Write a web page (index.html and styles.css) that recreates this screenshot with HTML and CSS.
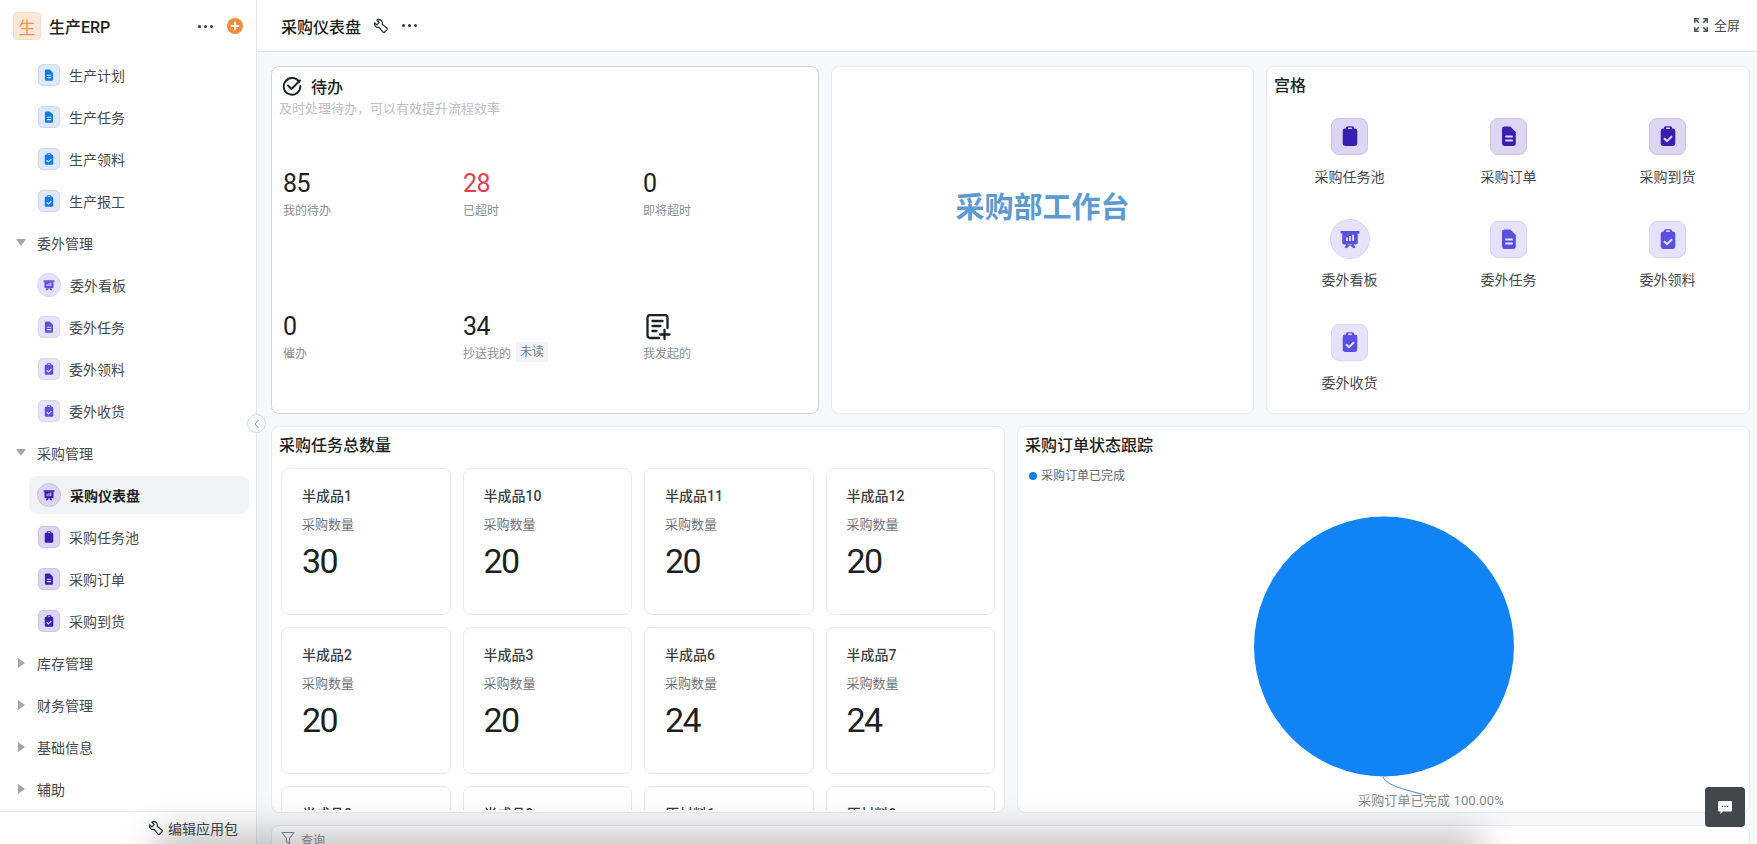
FILE: index.html
```html
<!DOCTYPE html>
<html lang="zh-CN">
<head>
<meta charset="utf-8">
<title>采购仪表盘</title>
<link rel="stylesheet" href="styles.css">
</head>
<body>
<svg class="defs" width="0" height="0" aria-hidden="true">
  <symbol id="i-clip" viewBox="0 0 24 24">
    <rect x="4.7" y="4.6" width="14.6" height="17.4" rx="2.4" fill="currentColor"/>
    <rect x="8" y="2.2" width="8" height="4.6" rx="1.6" fill="currentColor"/>
    <rect x="10" y="3.6" width="4" height="1.3" rx=".6" class="knock"/>
  </symbol>
  <symbol id="i-check" viewBox="0 0 24 24">
    <rect x="4.7" y="4.6" width="14.6" height="17.4" rx="2.4" fill="currentColor"/>
    <rect x="8" y="2.2" width="8" height="4.6" rx="1.6" fill="currentColor"/>
    <rect x="10" y="3.6" width="4" height="1.3" rx=".6" class="knock"/>
    <path d="M8 14.2l3 3 5-5" fill="none" stroke-width="2" class="knock-line"/>
  </symbol>
  <symbol id="i-doc" viewBox="0 0 24 24">
    <path d="M7.4 2.5h5.8l5.6 5.6v11.5a2.4 2.4 0 0 1-2.4 2.4H7.4A2.4 2.4 0 0 1 5 19.6V4.9a2.4 2.4 0 0 1 2.4-2.4z" fill="currentColor"/>
    <rect x="8.2" y="11.6" width="7.6" height="1.8" rx=".4" class="knock"/>
    <rect x="8.2" y="15.6" width="7.6" height="1.8" rx=".4" class="knock"/>
  </symbol>
  <symbol id="i-board" viewBox="0 0 24 24">
    <rect x="2.5" y="4" width="19" height="2.4" rx=".5" fill="currentColor"/>
    <path d="M4.2 6h15.6v9.5a2 2 0 0 1-2 2H6.200a2 2 0 0 1-2-2z" fill="currentColor"/>
    <path d="M8.500 17l-2 3.500 2 .8 3.500-3zM15.500 17l2 3.500-2 .8-3.500-3z" fill="currentColor"/>
    <rect x="8" y="10.500" width="1.800" height="3.500" class="knock"/>
    <rect x="11.100" y="9" width="1.800" height="5" class="knock"/>
    <rect x="14.200" y="7.800" width="1.800" height="6.200" class="knock"/>
  </symbol>
  <symbol id="i-wrench" viewBox="0 0 16 16">
    <path d="M10.200 1.500a3.600 3.600 0 0 0-3.400 4.700L1.800 10.300l.1 1.300 2.600 2.700 1.300.1 0 0 4.100-5.100a3.600 3.600 0 0 0 4.500-4.500l-2.300 2.100-2.300-2.300 2.200-2.300a3.600 3.600 0 0 0-1.800-.800z" transform="matrix(-1 0 0 1 16 0)" fill="none" stroke="currentColor" stroke-width="1.300" stroke-linejoin="round"/>
  </symbol>
</svg>

<aside class="sidebar">
  <header class="side-head">
    <span class="logo">生</span>
    <span class="app-name">生产ERP</span>
    <span class="dots side-dots"><i></i><i></i><i></i></span>
    <span class="add-btn">
      <svg width="16" height="16" viewBox="0 0 16 16"><circle cx="8" cy="8" r="8" fill="#f58b3e"/><path d="M8 4.500v7M4.500 8h7" stroke="#fff" stroke-width="1.800" stroke-linecap="round"/></svg>
    </span>
  </header>
  <nav class="side-list">
    <a class="item"><span class="tile blue"><svg class="ico"><use href="#i-doc"/></svg></span>生产计划</a>
    <a class="item"><span class="tile blue"><svg class="ico"><use href="#i-doc"/></svg></span>生产任务</a>
    <a class="item"><span class="tile blue"><svg class="ico"><use href="#i-check"/></svg></span>生产领料</a>
    <a class="item"><span class="tile blue"><svg class="ico"><use href="#i-check"/></svg></span>生产报工</a>
    <div class="group"><span class="tri down"></span>委外管理</div>
    <a class="item"><span class="tile round light"><svg class="ico"><use href="#i-board"/></svg></span>委外看板</a>
    <a class="item"><span class="tile light"><svg class="ico"><use href="#i-doc"/></svg></span>委外任务</a>
    <a class="item"><span class="tile light"><svg class="ico"><use href="#i-check"/></svg></span>委外领料</a>
    <a class="item"><span class="tile light"><svg class="ico"><use href="#i-check"/></svg></span>委外收货</a>
    <div class="group"><span class="tri down"></span>采购管理</div>
    <a class="item active"><span class="tile round dark"><svg class="ico"><use href="#i-board"/></svg></span>采购仪表盘</a>
    <a class="item"><span class="tile dark"><svg class="ico"><use href="#i-clip"/></svg></span>采购任务池</a>
    <a class="item"><span class="tile dark"><svg class="ico"><use href="#i-doc"/></svg></span>采购订单</a>
    <a class="item"><span class="tile dark"><svg class="ico"><use href="#i-check"/></svg></span>采购到货</a>
    <div class="group"><span class="tri right"></span>库存管理</div>
    <div class="group"><span class="tri right"></span>财务管理</div>
    <div class="group"><span class="tri right"></span>基础信息</div>
    <div class="group"><span class="tri right"></span>辅助</div>
  </nav>
  <footer class="side-foot">
    <svg class="wrench"><use href="#i-wrench"/></svg>编辑应用包
  </footer>
  <button class="collapse" aria-label="收起">
    <svg width="8" height="10" viewBox="0 0 8 10"><path d="M5.500 1L2 5l3.500 4" fill="none" stroke="#9a9ea6" stroke-width="1"/></svg>
  </button>
</aside>

<main class="main">
  <header class="top">
    <h1 class="top-title">采购仪表盘</h1>
    <svg class="wrench top-wrench"><use href="#i-wrench"/></svg>
    <span class="dots"><i></i><i></i><i></i></span>
    <span class="full">
      <svg width="14" height="14" viewBox="0 0 14 14"><path d="M.8 4.800V.8h4M9.200.8h4v4M13.200 9.200v4h-4M4.800 13.200h-4v-4" fill="none" stroke="#4d5157" stroke-width="1.600"/><path d="M1.500 1.500l3.300 3.300M12.500 1.500L9.200 4.800M12.500 12.500L9.200 9.200M1.500 12.500l3.300-3.300" stroke="#4d5157" stroke-width="1.600"/></svg>
      全屏
    </span>
  </header>

  <div class="board">
    <section class="row-one">
      <div class="card todo">
        <div class="todo-title">
          <svg width="20" height="20" viewBox="0 0 20 20"><path d="M17.200 6.200A8.300 8.300 0 1 0 18.300 10" fill="none" stroke="#1c1f23" stroke-width="1.900" stroke-linecap="round"/><path d="M6 9.500l3.500 3.500 8.500-8.500" fill="none" stroke="#1c1f23" stroke-width="1.900" stroke-linecap="round" stroke-linejoin="round"/></svg>
          待办
        </div>
        <p class="todo-sub">及时处理待办，可以有效提升流程效率</p>
        <div class="stats">
          <div class="stat"><b class="num">85</b><span class="lab">我的待办</span></div>
          <div class="stat"><b class="num red">28</b><span class="lab">已超时</span></div>
          <div class="stat"><b class="num">0</b><span class="lab">即将超时</span></div>
          <div class="stat"><b class="num">0</b><span class="lab">催办</span></div>
          <div class="stat"><b class="num">34</b><span class="lab">抄送我的<em class="tag">未读</em></span></div>
          <div class="stat">
            <span class="num note">
              <svg class="note-ico" width="25" height="26" viewBox="0 0 25 26"><path d="M13 24H4a2.500 2.500 0 0 1-2.500-2.500v-18A2.500 2.500 0 0 1 4 1h15a2.500 2.500 0 0 1 2.500 2.500V14" fill="none" stroke="#1c1f23" stroke-width="2.300" stroke-linecap="round"/><path d="M6.500 7h10M6.500 12h8M6.500 17h4M18.500 16v9M14 20.500h9.500" fill="none" stroke="#1c1f23" stroke-width="2.300" stroke-linecap="round"/></svg>
            </span>
            <span class="lab">我发起的</span>
          </div>
        </div>
      </div>

      <div class="card hero"><h2 class="hero-text">采购部工作台</h2></div>

      <div class="card grid-card">
        <h3 class="card-title">宫格</h3>
        <div class="grid">
          <div class="cell"><span class="box"><span class="tile big dark"><svg class="ico"><use href="#i-clip"/></svg></span></span>采购任务池</div>
          <div class="cell"><span class="box"><span class="tile big dark"><svg class="ico"><use href="#i-doc"/></svg></span></span>采购订单</div>
          <div class="cell"><span class="box"><span class="tile big dark"><svg class="ico"><use href="#i-check"/></svg></span></span>采购到货</div>
          <div class="cell"><span class="box"><span class="tile big round light"><svg class="ico"><use href="#i-board"/></svg></span></span>委外看板</div>
          <div class="cell"><span class="box"><span class="tile big light"><svg class="ico"><use href="#i-doc"/></svg></span></span>委外任务</div>
          <div class="cell"><span class="box"><span class="tile big light"><svg class="ico"><use href="#i-check"/></svg></span></span>委外领料</div>
          <div class="cell"><span class="box"><span class="tile big light"><svg class="ico"><use href="#i-check"/></svg></span></span>委外收货</div>
        </div>
      </div>
    </section>

    <section class="row-two">
      <div class="card tasks">
        <h3 class="card-title">采购任务总数量</h3>
        <div class="task-grid">
          <div class="task"><div class="t-name">半成品1</div><div class="t-lab">采购数量</div><div class="t-num">30</div></div>
          <div class="task"><div class="t-name">半成品10</div><div class="t-lab">采购数量</div><div class="t-num">20</div></div>
          <div class="task"><div class="t-name">半成品11</div><div class="t-lab">采购数量</div><div class="t-num">20</div></div>
          <div class="task"><div class="t-name">半成品12</div><div class="t-lab">采购数量</div><div class="t-num">20</div></div>
          <div class="task"><div class="t-name">半成品2</div><div class="t-lab">采购数量</div><div class="t-num">20</div></div>
          <div class="task"><div class="t-name">半成品3</div><div class="t-lab">采购数量</div><div class="t-num">20</div></div>
          <div class="task"><div class="t-name">半成品6</div><div class="t-lab">采购数量</div><div class="t-num">24</div></div>
          <div class="task"><div class="t-name">半成品7</div><div class="t-lab">采购数量</div><div class="t-num">24</div></div>
          <div class="task"><div class="t-name">半成品8</div><div class="t-lab">采购数量</div><div class="t-num">20</div></div>
          <div class="task"><div class="t-name">半成品9</div><div class="t-lab">采购数量</div><div class="t-num">20</div></div>
          <div class="task"><div class="t-name">原材料1</div><div class="t-lab">采购数量</div><div class="t-num">20</div></div>
          <div class="task"><div class="t-name">原材料2</div><div class="t-lab">采购数量</div><div class="t-num">20</div></div>
        </div>
      </div>

      <div class="card chart">
        <h3 class="card-title">采购订单状态跟踪</h3>
        <div class="legend"><i class="legend-dot"></i>采购订单已完成</div>
        <svg class="pie" viewBox="0 0 731 326" width="731" height="326">
          <circle cx="366" cy="160.500" r="130" fill="#1084f4"/>
          <path d="M365 291c4 9 24 13 42 18" fill="none" stroke="#3d86c6" stroke-width="1"/>
          <text x="340" y="319" class="pie-label">采购订单已完成 100.00%</text>
        </svg>
      </div>
    </section>

    <section class="card query">
      <svg width="14" height="14" viewBox="0 0 14 14"><path d="M1 1.500h12L8.500 7.500v5l-3-1.500V7.500z" fill="none" stroke="#8a8f99" stroke-width="1.100" stroke-linejoin="round"/></svg>
      查询
    </section>
  </div>
</main>

<button class="chat" aria-label="反馈">
  <svg width="16" height="16" viewBox="0 0 16 16"><path d="M2 2h12a1 1 0 0 1 1 1v8.500a1 1 0 0 1-1 1H6L3.500 15v-2.500H2a1 1 0 0 1-1-1V3a1 1 0 0 1 1-1z" fill="#fff"/><path d="M4.800 7.300h1.200M7.400 7.300h1.200M10 7.300h1.200" stroke="#42464d" stroke-width="1.200"/></svg>
</button>
<div class="bottom-shade"></div>
</body>
</html>
```

FILE: styles.css
```css
* { box-sizing: border-box; }
html, body { height: 100%; }
body {
  margin: 0;
  height: 844px;
  display: flex;
  overflow: hidden;
  position: relative;
  background: #f7f8fa;
  color: #1f2329;
  font-family: Roboto, "Noto Sans CJK SC", sans-serif;
  font-size: 14px;
}
.defs { position: absolute; }
h1, h2, h3, p { margin: 0; }
em { font-style: normal; }

/* sidebar */
.sidebar {
  width: 257px;
  flex: none;
  position: relative;
  z-index: 2;
  display: flex;
  flex-direction: column;
  background: #fff;
  border-right: 1px solid #e5e6eb;
}
.side-head {
  height: 52px;
  flex: none;
  display: flex;
  align-items: center;
  padding-left: 13px;
}
.logo {
  width: 28px;
  height: 28px;
  display: flex;
  align-items: center;
  justify-content: center;
  background: #fde7d8;
  border: 1px solid #f8dcc8;
  border-radius: 4px;
  color: #ef9450;
  font-size: 17px;
}
.app-name {
  margin-left: 8px;
  font-size: 16px;
  font-weight: 500;
  color: #1c1f23;
}
.dots { display: inline-flex; gap: 3px; align-items: center; }
.dots i { width: 3px; height: 3px; border-radius: 50%; background: #33373d; }
.side-dots { margin-left: auto; }
.add-btn { display: flex; margin: 0 13px 0 14px; }

.side-list {
  flex: 1;
  min-height: 0;
  overflow: hidden;
  padding-top: 4px;
  display: flex;
  flex-direction: column;
  gap: 4px;
}
.item, .group {
  flex: none;
  height: 38px;
  display: flex;
  align-items: center;
  color: #45494f;
}
.item {
  margin-left: 29px;
  width: 220px;
  padding-left: 8px;
  border-radius: 8px;
}
.item .tile { margin-right: 9px; }
.item.active { background: #f2f3f7; color: #1c1f23; font-weight: 600; }
.group { position: relative; padding-left: 37px; }
.tri { position: absolute; width: 0; height: 0; border-style: solid; border-color: transparent; }
.tri.down { left: 16px; top: 15px; border-width: 7px 5.5px 0; border-top-color: #a3a6ac; }
.tri.right { left: 18px; top: 14px; border-width: 5.5px 0 5.5px 7px; border-left-color: #a3a6ac; }

.side-foot {
  height: 33px;
  flex: none;
  border-top: 1px solid #e5e6eb;
  display: flex;
  align-items: center;
  justify-content: flex-end;
  gap: 4px;
  padding: 0 18px 0 0;
  color: #45494f;
}
.wrench { width: 16px; height: 16px; color: #33373d; }

.collapse {
  position: absolute;
  right: -10px;
  top: 414px;
  width: 19px;
  height: 19px;
  padding: 0;
  display: flex;
  align-items: center;
  justify-content: center;
  background: #f7f8fa;
  border: 1px solid #d8dbe0;
  border-radius: 50%;
}

/* icon tiles */
.tile {
  --bg: #fff;
  width: 22px;
  height: 22px;
  margin-left: 1px;
  flex: none;
  display: flex;
  align-items: center;
  justify-content: center;
  background: var(--bg);
  border: 1px solid var(--bd);
  border-radius: 5px;
  color: var(--fg);
}
.tile.round { width: 24px; height: 24px; margin-left: 0; border-radius: 50%; }
.blue { --bg: #dfe7fb; --bd: #cbd8f3; --fg: #0f7be8; }
.light { --bg: #e6e2fc; --bd: #d9d3f6; --fg: #5a50e0; }
.dark { --bg: #ddd6f3; --bd: #cbc1ea; --fg: #371fb0; }
.ico { width: 14px; height: 14px; }
.knock { fill: var(--bg); }
.knock-line { stroke: var(--bg); }
.tile.big { width: 37px; height: 37px; margin: 0; border-radius: 8px; }
.tile.big.round { width: 40px; height: 40px; border-radius: 50%; }
.tile.big .ico { width: 24px; height: 24px; }

/* main */
.main { flex: 1; min-width: 0; display: flex; flex-direction: column; }
.top {
  height: 52px;
  flex: none;
  display: flex;
  align-items: center;
  padding: 0 17px 0 24px;
  background: #fff;
  border-bottom: 1px solid #e5e6eb;
}
.top-title { font-size: 16px; font-weight: 500; color: #1c1f23; }
.top-wrench { margin: 0 13px 0 12px; }
.full {
  margin-left: auto;
  display: flex;
  align-items: center;
  gap: 6px;
  padding-bottom: 2px;
  font-size: 13px;
  color: #45494f;
}

.board {
  flex: 1;
  min-height: 0;
  overflow: hidden;
  padding: 14px 7px 0 14px;
  display: flex;
  flex-direction: column;
  gap: 12px;
}
.card {
  background: #fff;
  border: 1px solid #e8eaed;
  border-radius: 8px;
}
.row-one {
  flex: none;
  display: grid;
  grid-template-columns: 548px 423px 484px;
  grid-template-rows: 348px;
  gap: 12px;
}
.row-two {
  flex: none;
  display: grid;
  grid-template-columns: 734px 733px;
  grid-template-rows: 387px;
  gap: 12px;
}
.card-title {
  font-size: 16px;
  font-weight: 500;
  line-height: 24px;
  color: #1c1f23;
}

/* todo */
.todo { border-color: #cdd5d8; padding: 7px 7px 0; overflow: hidden; }
.todo-title {
  height: 24px;
  display: flex;
  align-items: center;
  gap: 9px;
  padding-left: 3px;
  font-size: 16px;
  font-weight: 500;
  color: #1c1f23;
}
.todo-sub { margin-top: 2px; font-size: 13px; line-height: 18px; color: #bcbfc4; }
.stats {
  margin-top: 50px;
  padding-left: 4px;
  display: grid;
  grid-template-columns: repeat(3, 180px);
  grid-auto-rows: 143px;
}
.stat { display: flex; flex-direction: column; }
.num { height: 32px; font-size: 25px; line-height: 32px; font-weight: 400; letter-spacing: -.5px; color: #1c1f23; }
.num.red { color: #e0414f; }
.num.note { display: block; padding: 3px 0 0 3px; }
.note-ico { display: block; }
.lab { display: flex; align-items: center; height: 20px; margin-top: -1px; font-size: 12px; color: #8a8e96; }
.tag {
  margin-left: 5px;
  padding: 0 4px;
  line-height: 20px;
  background: #f2f3f7;
  border-radius: 2px;
  color: #777b82;
}

/* hero */
.hero { display: flex; align-items: center; justify-content: center; padding-bottom: 70px; }
.hero-text { font-size: 29px; font-weight: 600; color: #5c9bd1; }

/* grid card */
.grid-card { padding: 7px; overflow: hidden; }
.grid {
  margin: 18px 0 0 -4px;
  display: grid;
  grid-template-columns: repeat(3, 159px);
  row-gap: 32px;
}
.cell { display: flex; flex-direction: column; align-items: center; line-height: 20px; color: #45494f; }
.box { height: 40px; margin-bottom: 11px; display: flex; align-items: center; }

/* tasks */
.tasks { display: flex; flex-direction: column; min-height: 0; padding: 7px 0 2px; overflow: hidden; }
.tasks .card-title { padding-left: 7px; }
.task-grid {
  flex: 1;
  min-height: 0;
  overflow: hidden;
  margin-top: 10px;
  padding: 0 9px;
  display: grid;
  grid-template-columns: repeat(4, 1fr);
  grid-auto-rows: 147px;
  gap: 12px;
}
.task {
  border: 1px solid #e8eaed;
  border-radius: 8px;
  padding: 16px 0 0 20px;
}
.t-name { line-height: 22px; font-weight: 500; color: #3b3f45; }
.t-lab { margin-top: 8px; font-size: 13px; line-height: 20px; color: #70747b; }
.t-num { margin-top: 6px; font-size: 34px; line-height: 40px; letter-spacing: -1.500px; color: #1c1f23; }

/* chart */
.chart { padding: 7px 0 0; overflow: hidden; }
.chart .card-title { padding-left: 7px; }
.legend {
  margin: 8px 0 0 11px;
  display: flex;
  align-items: center;
  gap: 4px;
  font-size: 12px;
  line-height: 20px;
  color: #63676e;
}
.legend-dot { width: 8px; height: 8px; border-radius: 50%; background: #0f7fe0; }
.pie { display: block; }
.pie-label { font-size: 13px; letter-spacing: .15px; fill: #86898f; }

/* query */
.query {
  flex: none;
  height: 60px;
  padding: 5px 9px;
  display: flex;
  align-items: flex-start;
  gap: 6px;
  font-size: 12px;
  color: #8a8f99;
}

/* overlays */
.chat {
  position: absolute;
  left: 1705px;
  top: 787px;
  z-index: 4;
  width: 40px;
  height: 40px;
  padding: 0;
  display: flex;
  align-items: center;
  justify-content: center;
  background: #42464d;
  border: 0;
  border-radius: 4px;
}
.bottom-shade {
  position: absolute;
  left: 170px;
  right: 290px;
  bottom: -24px;
  z-index: 3;
  height: 24px;
  pointer-events: none;
  box-shadow: 0 0 34px 14px rgba(0, 0, 0, .22);
}
```
